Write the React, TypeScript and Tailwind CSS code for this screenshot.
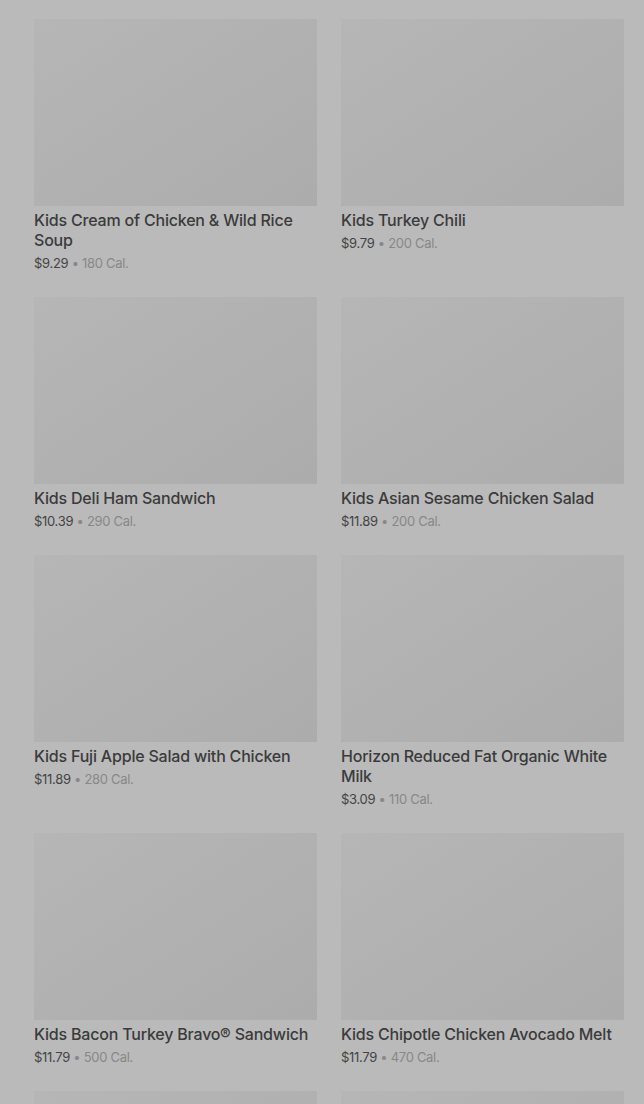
import React from "react";

interface Item {
  name: string;
  price: string;
  cal: string;
}

const items: Item[] = [
  { name: "Kids Cream of Chicken & Wild Rice Soup", price: "$9.29", cal: "180 Cal." },
  { name: "Kids Turkey Chili", price: "$9.79", cal: "200 Cal." },
  { name: "Kids Deli Ham Sandwich", price: "$10.39", cal: "290 Cal." },
  { name: "Kids Asian Sesame Chicken Salad", price: "$11.89", cal: "200 Cal." },
  { name: "Kids Fuji Apple Salad with Chicken", price: "$11.89", cal: "280 Cal." },
  { name: "Horizon Reduced Fat Organic White Milk", price: "$3.09", cal: "110 Cal." },
  { name: "Kids Bacon Turkey Bravo® Sandwich", price: "$11.79", cal: "500 Cal." },
  { name: "Kids Chipotle Chicken Avocado Melt", price: "$11.79", cal: "470 Cal." },
  { name: "", price: "", cal: "" },
  { name: "", price: "", cal: "" },
];

export default function App() {
  return (
    <div
      className="min-h-[1104px] bg-[#bababa] pl-[34px] pr-[20px] pt-[19px]"
      style={{ fontFamily: "Inter, 'Noto Sans', sans-serif" }}
    >
      <div className="grid grid-cols-2 gap-x-[24px] gap-y-[24px]">
        {items.map((item, i) => (
          <div key={i} className="flex flex-col">
            <div className="h-[187px] bg-gradient-to-br from-[#b6b6b6] via-[#b1b1b1] to-[#acacac]" />
            {item.name && (
              <>
                <div className="mt-1 text-[16px] leading-5 font-medium text-[#3b3b3b] tracking-[-0.2px]">
                  {item.name}
                </div>
                <div className="mt-[3px] h-5 text-[13px] leading-5 text-[#444] tracking-[-0.3px]">
                  {item.price}
                  <span className="text-[#888]"> • {item.cal}</span>
                </div>
              </>
            )}
          </div>
        ))}
      </div>
    </div>
  );
}
